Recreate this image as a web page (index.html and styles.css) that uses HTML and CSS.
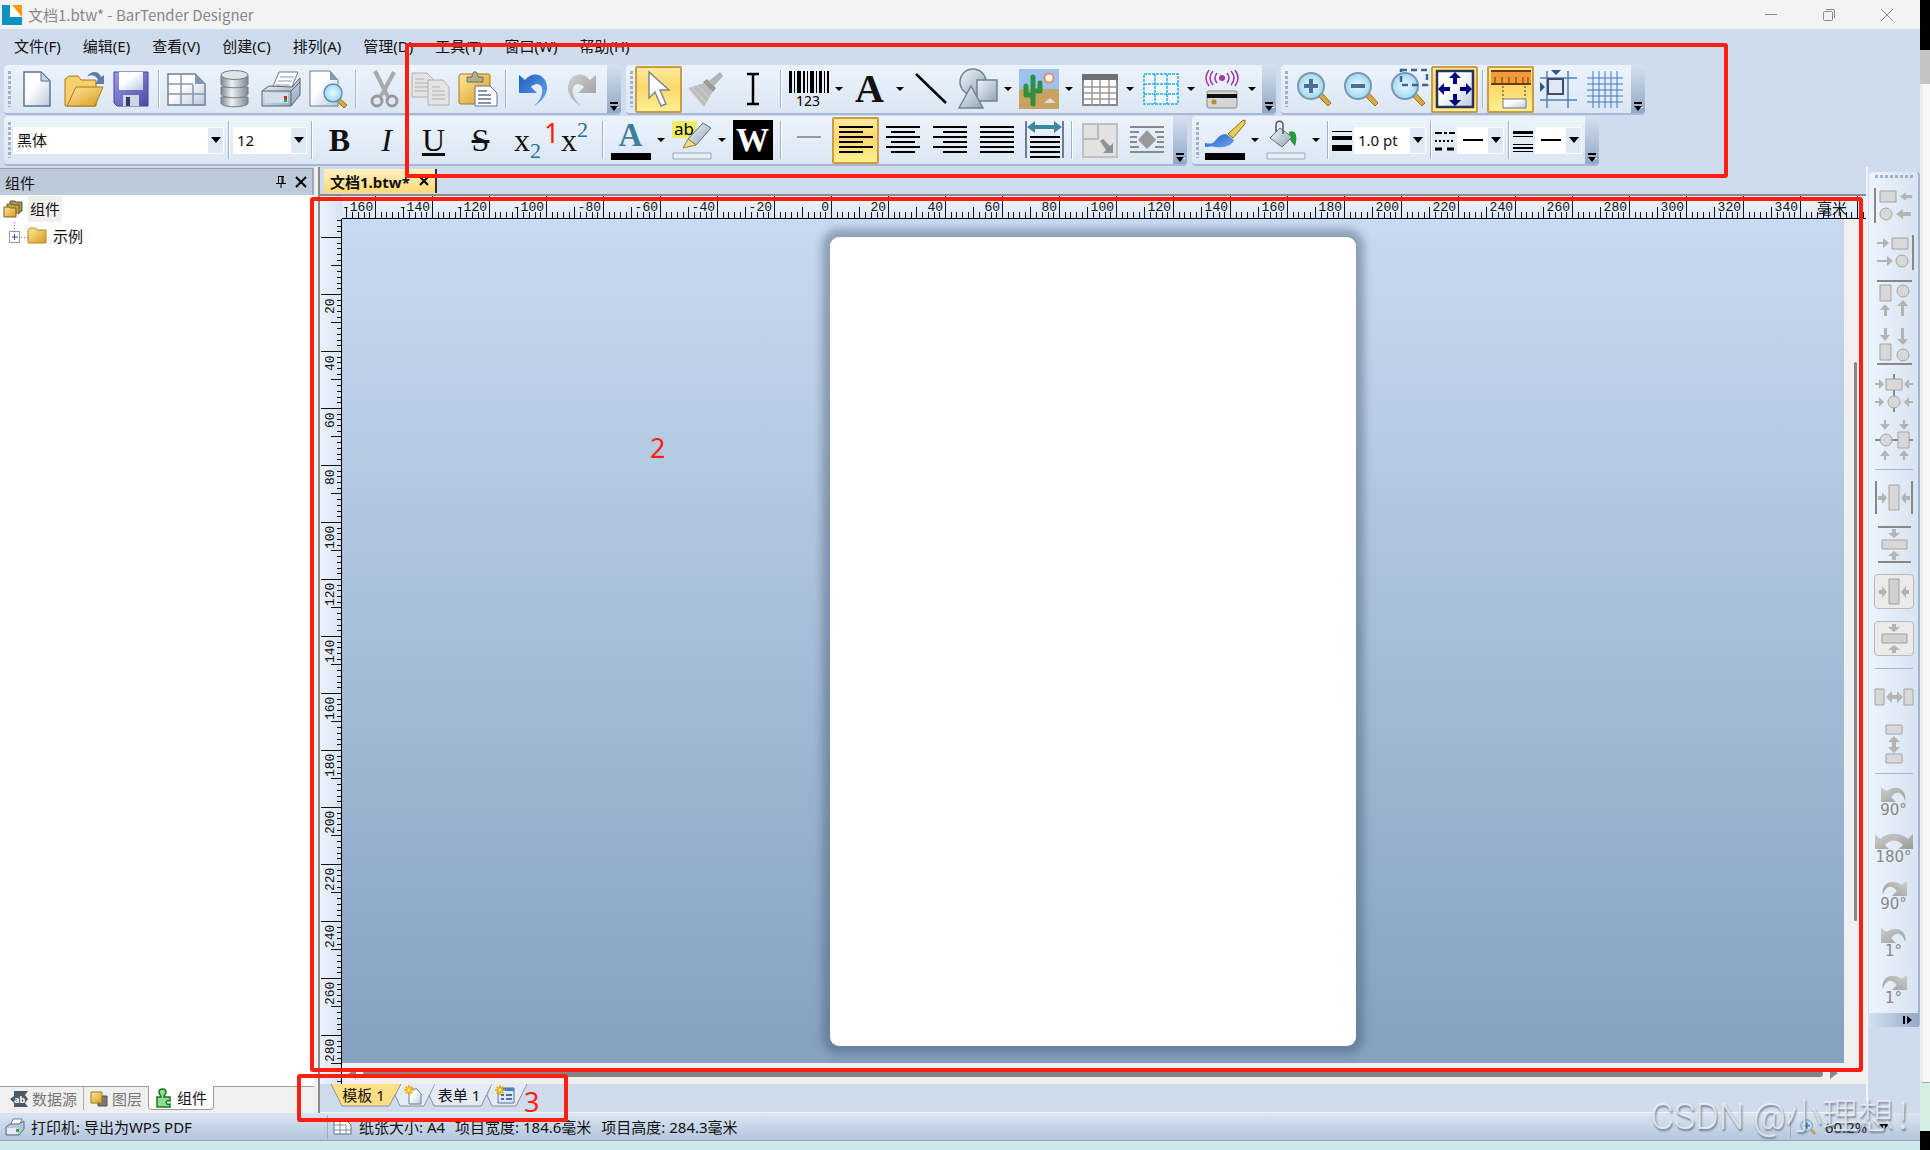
FILE: index.html
```html
<!DOCTYPE html>
<html lang="zh-CN">
<head>
<meta charset="utf-8">
<title>文档1.btw* - BarTender Designer</title>
<link rel="stylesheet" href="styles.css">
</head>
<body>
<svg class="defs" width="0" height="0" aria-hidden="true">
  <defs>
    <linearGradient id="g-paper" x1="0" y1="0" x2="1" y2="1"><stop offset=".4" stop-color="#fff"/><stop offset="1" stop-color="#b9c9df"/></linearGradient>
    <linearGradient id="g-gold" x1="0" y1="0" x2="1" y2="1"><stop offset="0" stop-color="#ffe9a0"/><stop offset="1" stop-color="#d99a1c"/></linearGradient>
    <linearGradient id="g-steel" x1="0" y1="0" x2="1" y2="0"><stop offset="0" stop-color="#7e8891"/><stop offset=".4" stop-color="#eef1f3"/><stop offset="1" stop-color="#7e8891"/></linearGradient>
    <linearGradient id="g-grey" x1="0" y1="0" x2="1" y2="1"><stop offset="0" stop-color="#cfcfcf"/><stop offset="1" stop-color="#9a9a9a"/></linearGradient>
    <linearGradient id="g-blue" x1="0" y1="0" x2="1" y2="1"><stop offset="0" stop-color="#1f5fc0"/><stop offset="1" stop-color="#6ea6ee"/></linearGradient>
    <linearGradient id="g-shape" x1="0" y1="0" x2="1" y2="1"><stop offset="0" stop-color="#f2f6f9"/><stop offset="1" stop-color="#8fa5b5"/></linearGradient>
    <linearGradient id="g-violet" x1="0" y1="0" x2="1" y2="1"><stop offset="0" stop-color="#9a9ae6"/><stop offset="1" stop-color="#4b4ba6"/></linearGradient>
    <radialGradient id="g-lens"><stop offset="0" stop-color="#e9fbff"/><stop offset="1" stop-color="#9fd8f2"/></radialGradient>
    <symbol id="lens" viewBox="0 0 40 40"><path d="M24 27l10 10 3-3-9-10z" fill="#d9a93f" stroke="#94722a"/><circle cx="17" cy="17" r="13" fill="url(#g-lens)" stroke="#7c98ae" stroke-width="2"/></symbol>
    <symbol id="more" viewBox="0 0 14 14"><path d="M3 2h8v2H3z" fill="#000"/><path d="M4 7h8v1H4z" fill="#fff"/><path d="M3 6h8l-4 5z" fill="#000"/></symbol>
    <symbol id="al" viewBox="0 0 16 12"><path d="M0 6l7-5v3h8v4H7v3z" fill="#b4b4b4"/></symbol>
    <symbol id="rot" viewBox="0 0 30 18"><path d="M1 1v16h16l-5-5c4-7 12-7 15 4C29 5 19-3 7 5z" fill="url(#g-grey)"/></symbol>
    <symbol id="sun" viewBox="0 0 12 12"><path d="M6 0v12M0 6h12M2 2l8 8M10 2l-8 8" stroke="#f5a800" stroke-width="2"/><circle cx="6" cy="6" r="2" fill="#ffec7a"/></symbol>
    <pattern id="ticks-h" x="33" y="0" width="57" height="22" patternUnits="userSpaceOnUse"><path d="M.5 0v22M28.5 11v11M6.5 16v6M11.5 16v6M17.5 16v6M23.5 16v6M34.5 16v6M40.5 16v6M46.5 16v6M51.5 16v6" stroke="#111"/></pattern>
    <pattern id="ticks-v" x="0" y="18" width="22" height="57" patternUnits="userSpaceOnUse"><path d="M1 .5h21M11 28.5h11M17 6.5h5M17 11.5h5M17 17.5h5M17 23.5h5M17 34.5h5M17 40.5h5M17 46.5h5M17 51.5h5" stroke="#111"/></pattern>
  </defs>
</svg>

<div class="screen">
<div class="desktop">
<div class="window">

  <header class="titlebar">
    <svg width="20" height="20" viewBox="0 0 20 20"><path d="M0 0h20v20H0z" fill="#0b93c6"/><path d="M8 0h12v12H8z" fill="#fff"/><path d="M10 0h10v12z" fill="#ff9a00"/></svg>
    <h1>文档1.btw* - BarTender Designer</h1>
    <button aria-label="最小化"><svg width="14" height="14"><path d="M1 6.500h12" stroke="#888"/></svg></button>
    <button aria-label="还原"><svg width="14" height="14" fill="none" stroke="#888"><rect x="1.500" y="3.500" width="9" height="9" rx="1"/><path d="M4 1.500h7q1.500 0 1.500 1.500v7"/></svg></button>
    <button aria-label="关闭"><svg width="14" height="14"><path d="M1 1l12 12M13 1L1 13" stroke="#888"/></svg></button>
  </header>

  <nav class="menu">
    <button>文件(F)</button><button>编辑(E)</button><button>查看(V)</button><button>创建(C)</button><button>排列(A)</button><button>管理(D)</button><button>工具(T)</button><button>窗口(W)</button><button>帮助(H)</button>
  </nav>

  <div class="bars">
    <div class="bar">
      <i class="grip"></i>
      <button class="tool" aria-label="新建"><svg viewBox="0 0 40 40"><path d="M7 3h17l9 9v25H7z" fill="url(#g-paper)" stroke="#5f7390" stroke-width="1.500"/><path d="M24 3v9h9z" fill="#c7d5e8" stroke="#5f7390"/></svg></button>
      <button class="tool" aria-label="打开"><svg viewBox="0 0 40 40"><path d="M1 37V10l4-3h9l3 4h15v26z" fill="#f6d06a" stroke="#a87a1c"/><path d="M3 37l9-19h27l-8 19z" fill="url(#g-gold)" stroke="#a87a1c"/><path d="M23 8c4-7 12-6 14 0l3-2v9h-9l3-4c-2-5-7-6-11-3z" fill="#5b7da8"/></svg></button>
      <button class="tool" aria-label="保存"><svg viewBox="0 0 40 40"><path d="M3 3h34v34H6l-3-3z" fill="url(#g-violet)" stroke="#44449a"/><path d="M8 3h24v18H8z" fill="url(#g-paper)"/><path d="M12 26h16v11H12z" fill="#cfd6e6"/><path d="M15 28h4v9h-4z" fill="#333a5c"/></svg></button>
      <i class="sep"></i>
      <button class="tool" aria-label="页面设置"><svg viewBox="0 0 40 40"><path d="M1 5h27l10 10v21H1z" fill="url(#g-paper)" stroke="#6e7f98" stroke-width="1.500"/><path d="M28 5v10h10z" fill="#8598b2"/><path d="M14 5v31M26 16v20M1 15h25M1 25h37" stroke="#8796ac" stroke-width="1.500" fill="none"/></svg></button>
      <button class="tool" aria-label="数据库"><svg viewBox="0 0 40 40" stroke="#727c85"><path d="M7 28v6c0 5 27 5 27 0v-6z" fill="url(#g-steel)"/><path d="M7 18v7c0 5 27 5 27 0v-7z" fill="url(#g-steel)"/><path d="M7 7v8c0 5 27 5 27 0V7z" fill="url(#g-steel)"/><ellipse cx="20.500" cy="6" rx="13.500" ry="4.500" fill="#dfe4e8"/></svg></button>
      <button class="tool" aria-label="打印"><svg viewBox="0 0 40 40"><path d="M11 20L18 3h19l-7 17z" fill="#fff" stroke="#6b7c94"/><path d="M19 8h14M17 12h14M15 16h14" stroke="#8a99ad"/><path d="M1 22l7-5 23 1 8-9v17l-9 11H1z" fill="url(#g-shape)" stroke="#53657f"/><path d="M1 22h29l9-9M30 22v15" fill="none" stroke="#53657f"/><path d="M4 24h23v10H4z" fill="#d5dfec"/><path d="M23 27h3v3h-3z" fill="#d22"/><path d="M23 30h3v3h-3z" fill="#1a3"/></svg></button>
      <button class="tool" aria-label="打印预览"><svg viewBox="0 0 40 40"><path d="M2 2h20l8 9v26H2z" fill="url(#g-paper)" stroke="#6b7c94"/><path d="M22 2v9h8z" fill="#8598b2"/><path d="M31 29l8 7-3 3-8-8z" fill="#d9a93f" stroke="#94722a"/><circle cx="25" cy="24" r="9" fill="url(#g-lens)" stroke="#5f8fb5" stroke-width="1.500"/></svg></button>
      <i class="sep"></i>
      <button class="tool" aria-label="剪切"><svg viewBox="0 0 40 40"><path d="M11 2l10 20 3 6M30 3L20 22l-4 6" stroke="#aaa" stroke-width="4" fill="none"/><g fill="none" stroke="#999" stroke-width="3"><circle cx="13" cy="32" r="5"/><circle cx="28" cy="32" r="5"/></g></svg></button>
      <button class="tool" aria-label="复制"><svg viewBox="0 0 40 40" fill="#e4e4e4" stroke="#b0b0b0"><path d="M1 4h15l6 6v18H1z"/><path d="M4 10h9M4 14h14M4 18h14M4 22h14"/><path d="M17 11h15l6 7v18H17z"/><path d="M21 18h8M21 22h13M21 26h13M21 30h13"/></svg></button>
      <button class="tool" aria-label="粘贴"><svg viewBox="0 0 40 40"><rect x="1" y="5" width="31" height="30" rx="2" fill="url(#g-gold)" stroke="#a07618"/><path d="M9 13V8h5c0-7 6-7 6 0h5v5z" fill="#b0b08f" stroke="#6f6d50"/><path d="M17 17h15l7 7v13H17z" fill="#fff" stroke="#5f7390"/><path d="M20 22h9M20 26h13M20 30h13M20 34h13" stroke="#5f7390" stroke-width="1.500"/></svg></button>
      <i class="sep"></i>
      <button class="tool" aria-label="撤消"><svg viewBox="0 0 40 40"><path d="M5 6v18h18l-6-6c6-6 13-2 11 6-1 6-4 9-8 13 9-5 14-13 13-20C31 4 18 2 11 11z" fill="url(#g-blue)"/></svg></button>
      <button class="tool" aria-label="恢复"><svg viewBox="0 0 40 40"><path d="M35 6v18H17l6-6c-6-6-13-2-11 6 1 6 4 9 8 13C11 32 6 24 7 17 9 4 22 2 29 11z" fill="url(#g-grey)"/></svg></button>
      <button class="more" aria-label="更多"><svg width="14" height="14"><use href="#more"/></svg></button>
    </div>

    <div class="bar">
      <i class="grip"></i>
      <button class="tool on" aria-label="选择"><svg viewBox="0 0 40 40"><path d="M10 3v26l6-6 6 14 5-2-6-14h9z" fill="#fff" stroke="#7d8796" stroke-width="1.500"/></svg></button>
      <button class="tool" aria-label="格式刷"><svg viewBox="0 0 40 40"><path d="M2 19l16-5 9 8-9 16z" fill="#bdbdbd"/><path d="M2 19l16 19M6 18l14 16M11 16l12 13" stroke="#d8d8d8"/><path d="M17 13l4-3 9 9-3 4z" fill="#999"/><path d="M23 12L34 3l3 4-9 10z" fill="#b5b5b5"/></svg></button>
      <button class="tool" aria-label="文本光标"><svg viewBox="0 0 40 40"><path d="M14 5h5l1 1 1-1h5M20 5v30M14 35h5l1-1 1 1h5" stroke="#000" stroke-width="2.500" fill="none"/></svg></button>
      <i class="sep"></i>
      <button class="tool" aria-label="条形码"><svg viewBox="0 0 40 40"><path d="M0 2h3v22H0zM5 2h1v22H5zM8 2h4v22H8zM14 2h2v22h-2zM18 2h1v22h-1zM21 2h4v22h-4zM27 2h1v22h-1zM30 2h3v22h-3zM35 2h1v22h-1zM38 2h2v22h-2z"/><text x="19" y="37" text-anchor="middle" class="digits">123</text></svg></button>
      <button class="drop" aria-label="条形码选项"></button>
      <button class="tool glyph big" aria-label="文本">A</button>
      <button class="drop" aria-label="文本选项"></button>
      <button class="tool" aria-label="线条"><svg viewBox="0 0 40 40"><path d="M5 5l30 29" stroke="#000" stroke-width="2.500"/></svg></button>
      <button class="tool" aria-label="形状"><svg viewBox="0 0 40 40" fill="url(#g-shape)" stroke="#6c8496" stroke-width="1.500"><circle cx="15" cy="13" r="13"/><path d="M19 11h20v21H19z"/><path d="M13 17l12 22H1z"/></svg></button>
      <button class="drop" aria-label="形状选项"></button>
      <button class="tool" aria-label="图片"><svg viewBox="0 0 40 40"><path d="M0 0h40v21H0z" fill="#9cc2f0"/><path d="M0 20h40v20H0z" fill="#caa25f"/><circle cx="30" cy="9" r="4.500" fill="#fff" stroke="#ee8a5a" stroke-width="2"/><path d="M14 35V8M14 26H7v-9M14 22h7v-8" fill="none" stroke="#2e8f3e" stroke-width="5" stroke-linecap="round" stroke-linejoin="round"/><path d="M25 34l6-5 6 5z" fill="#dde"/></svg></button>
      <button class="drop" aria-label="图片选项"></button>
      <button class="tool" aria-label="表格"><svg viewBox="0 0 40 40"><path d="M3 6h34v30H3z" fill="#fff" stroke="#888" stroke-width="2"/><path d="M2 5h36v6H2z" fill="#707070"/><path d="M3 18h34M3 24h34M3 30h34M12 11v25M20 11v25M29 11v25" stroke="#999" stroke-width="1.500"/></svg></button>
      <button class="drop" aria-label="表格选项"></button>
      <button class="tool" aria-label="布局网格"><svg viewBox="0 0 40 40"><path d="M3 5h34v30H3zM3 15h34M3 25h34M14 5v30M26 5v30" fill="#fff" fill-opacity=".5" stroke="#1fb0f0" stroke-width="1.500" stroke-dasharray="3 1"/></svg></button>
      <button class="drop" aria-label="布局网格选项"></button>
      <button class="tool" aria-label="编码器"><svg viewBox="0 0 40 40"><g fill="none" stroke="#a23aa0" stroke-width="1.500"><path d="M15 4q-4 5 0 10M11 2q-6 7 0 14M7 1q-6 8 0 16M25 4q4 5 0 10M29 2q6 7 0 14M33 1q6 8 0 16"/></g><circle cx="20" cy="9" r="3" fill="#a23aa0"/><rect x="5" y="22" width="30" height="17" rx="2" fill="#d6d6d6" stroke="#888"/><path d="M5 25h30v4H5z" fill="#111"/><circle cx="12" cy="33" r="2.500" fill="#b98b32"/></svg></button>
      <button class="drop" aria-label="编码器选项"></button>
      <button class="more" aria-label="更多"><svg width="14" height="14"><use href="#more"/></svg></button>
    </div>

    <div class="bar">
      <i class="grip"></i>
      <button class="tool" aria-label="放大"><svg viewBox="0 0 40 40"><use href="#lens"/><path d="M17 10v14M10 17h14" stroke="#4d6f96" stroke-width="4"/></svg></button>
      <button class="tool" aria-label="缩小"><svg viewBox="0 0 40 40"><use href="#lens"/><path d="M10 17h14" stroke="#4d6f96" stroke-width="4"/></svg></button>
      <button class="tool" aria-label="缩放到选定区域"><svg viewBox="0 0 40 40"><use href="#lens"/><path d="M13 1h26v15H13z" fill="none" stroke="#3d6594" stroke-width="2.500" stroke-dasharray="6 4"/></svg></button>
      <button class="tool on" aria-label="适合窗口"><svg viewBox="0 0 40 40"><path d="M2 2h36v36H2z" fill="url(#g-paper)" stroke="#2b3350" stroke-width="2.500"/><path d="M20 3l6 6h-4v6h-4V9h-4zM20 37l6-6h-4v-6h-4v6h-4zM3 20l6-6v4h6v4H9v4zM37 20l-6-6v4h-6v4h6v4z" fill="#00007e"/></svg></button>
      <i class="sep"></i>
      <button class="tool on" aria-label="标尺"><svg viewBox="0 0 40 40"><path d="M0 1h40v14H0z" fill="#f29a38"/><path d="M0 2h40M0 15h40" stroke="#6b3b08" stroke-width="2"/><path d="M4 8v6M11 8v6M18 8v6M25 8v6M32 8v6M37 8v6" stroke="#6b3b08"/><path d="M12 17v13M34 17v13" stroke="#333" stroke-dasharray="2 2"/><path d="M12 30h23v9H12z" fill="url(#g-paper)" stroke="#6b7c94"/></svg></button>
      <button class="tool" aria-label="对齐参考线"><svg viewBox="0 0 40 40"><path d="M9 2v37M30 2v37M2 9h37M2 31h37" stroke="#4f82bd" stroke-width="1.500"/><path d="M10 10h15v15H10z" fill="#dfe9f6" stroke="#444b66" stroke-width="2"/><path d="M13 1h10l-5 5zM2 13v10l5-5z" fill="#2f5688"/></svg></button>
      <button class="tool" aria-label="网格"><svg viewBox="0 0 40 40"><path d="M8 2v37M14 2v37M20 2v37M26 2v37M32 2v37M2 9h36M2 15h36M2 21h36M2 27h36M2 33h36" stroke="#3f78bf"/></svg></button>
      <button class="more" aria-label="更多"><svg width="14" height="14"><use href="#more"/></svg></button>
    </div>
  </div>

  <div class="bars">
    <div class="bar">
      <i class="grip"></i>
      <label class="combo font"><select aria-label="字体"><option>黑体</option></select><i class="chev"></i></label>
      <i class="sep"></i>
      <label class="combo size"><select aria-label="字号"><option>12</option></select><i class="chev"></i></label>
      <i class="sep"></i>
      <button class="tool glyph" aria-label="粗体"><b>B</b></button>
      <button class="tool glyph" aria-label="斜体"><em>I</em></button>
      <button class="tool glyph" aria-label="下划线"><u>U</u></button>
      <button class="tool glyph" aria-label="删除线"><s>S</s></button>
      <button class="tool glyph" aria-label="下标">x<sub>2</sub></button>
      <button class="tool glyph" aria-label="上标">x<sup>2</sup></button>
      <i class="sep"></i>
      <button class="tool color" aria-label="字体颜色"><span>A</span><i class="swatch"></i></button>
      <button class="drop" aria-label="字体颜色选项"></button>
      <button class="tool" aria-label="突出显示"><svg viewBox="0 0 40 40"><path d="M0 1h25v17H0z" fill="#eeee62"/><text x="2" y="15" class="ab">ab</text><path d="M16 19L31 3l8 5-15 17z" fill="url(#g-shape)" stroke="#566a96"/><path d="M16 19l-5 9 13-3z" fill="#f3dc8a" stroke="#9b8230"/><path d="M1 33h38v6H1z" fill="#e9eef4" stroke="#9aa9bb"/></svg></button>
      <button class="drop" aria-label="突出显示选项"></button>
      <button class="tool" aria-label="反白"><span class="invert">W</span></button>
      <i class="sep"></i>
      <button class="tool" aria-label="水平线"><svg viewBox="0 0 40 40"><path d="M8 17h24" stroke="#999" stroke-width="2"/></svg></button>
      <button class="tool on" aria-label="左对齐"><svg viewBox="0 0 40 40"><path d="M3 7h34M3 12h24M3 17h34M3 22h24M3 27h34M3 32h24" stroke="#000" stroke-width="2"/></svg></button>
      <button class="tool" aria-label="居中"><svg viewBox="0 0 40 40"><path d="M3 7h34M8 12h24M3 17h34M8 22h24M3 27h34M8 32h24" stroke="#000" stroke-width="2"/></svg></button>
      <button class="tool" aria-label="右对齐"><svg viewBox="0 0 40 40"><path d="M3 7h34M13 12h24M3 17h34M13 22h24M3 27h34M13 32h24" stroke="#000" stroke-width="2"/></svg></button>
      <button class="tool" aria-label="两端对齐"><svg viewBox="0 0 40 40"><path d="M3 7h34M3 12h34M3 17h34M3 22h34M3 27h34M3 32h34" stroke="#000" stroke-width="2"/></svg></button>
      <button class="tool" aria-label="适应宽度"><svg viewBox="0 0 40 40"><path d="M2 1v37M39 1v37" stroke="#46586c" stroke-width="1.500"/><path d="M3 7l8-6v4h19V1l8 6-8 6V9H11v4z" fill="#3f87a3"/><path d="M6 17h30M6 22h30M6 27h30M6 32h30M6 37h30" stroke="#000" stroke-width="2"/></svg></button>
      <i class="sep"></i>
      <button class="tool" aria-label="缩放文字"><svg viewBox="0 0 40 40"><path d="M3 4h34v33H3z" fill="#e2e2e2" stroke="#c0c0c0" stroke-width="2"/><path d="M3 19h15V4" fill="none" stroke="#bbb" stroke-width="2"/><path d="M20 21l3-2 7 7 3-3v10H23l3-3z" fill="#909090"/></svg></button>
      <button class="tool" aria-label="环绕文字"><svg viewBox="0 0 40 40"><path d="M3 7h34M3 12h9M28 12h9M3 17h7M30 17h7M3 22h7M30 22h7M3 27h9M28 27h9M3 32h34" stroke="#8b8b8b" stroke-width="2"/><path d="M20 10l9 10-9 9-9-9z" fill="#999"/></svg></button>
      <button class="more" aria-label="更多"><svg width="14" height="14"><use href="#more"/></svg></button>
    </div>

    <div class="bar">
      <i class="grip"></i>
      <button class="tool" aria-label="线条颜色"><svg viewBox="0 0 40 40"><path d="M23 14L37 1l3-1v4L28 18z" fill="#edc95a" stroke="#8c6c1c"/><path d="M21 14l8 6c-2 6-10 8-19 7-4-1-6 0-10 0v-4c6 1 7 1 10-2 3-4 6-7 11-7z" fill="url(#g-blue)"/><path d="M0 33h40v7H0z"/></svg></button>
      <button class="drop" aria-label="线条颜色选项"></button>
      <button class="tool" aria-label="填充颜色"><svg viewBox="0 0 40 40"><path d="M23 12c7-3 9 5 6 14-4-4-6-7-6-14z" fill="#1fa03a"/><path d="M14 8l12 9-10 10L4 18z" fill="url(#g-shape)" stroke="#5d6f87"/><path d="M10 12V5c0-5 7-5 7 0v9" fill="none" stroke="#555" stroke-width="1.500"/><path d="M1 33h38v6H1z" fill="#e9eef4" stroke="#9aa9bb"/></svg></button>
      <button class="drop" aria-label="填充颜色选项"></button>
      <i class="sep"></i>
      <svg class="hint" width="22" height="24"><path d="M0 3h20v1H0zM0 8h20v4H0zM0 17h20v6H0z"/></svg>
      <label class="combo weight"><select aria-label="线条粗细"><option>1.0 pt</option></select><i class="chev"></i></label>
      <i class="sep"></i>
      <svg class="hint" width="22" height="24"><path d="M0 5h20" stroke="#000" stroke-width="2" stroke-dasharray="7 2 3 2"/><path d="M0 13h20" stroke="#000" stroke-width="2" stroke-dasharray="2 2"/><path d="M0 21h20" stroke="#000" stroke-width="3" stroke-dasharray="7 5"/></svg>
      <label class="combo line"><select aria-label="虚线样式"><option></option></select><i class="chev"></i></label>
      <i class="sep"></i>
      <svg class="hint" width="22" height="24"><path d="M0 3h20v3H0zM0 8h20v1H0zM0 16h20v1H0zM0 19h20v2H0zM0 23h20v1H0z"/></svg>
      <label class="combo line"><select aria-label="复合样式"><option></option></select><i class="chev"></i></label>
      <button class="more" aria-label="更多"><svg width="14" height="14"><use href="#more"/></svg></button>
    </div>
  </div>

  <main class="work">
    <aside class="panel">
      <header class="panel-head">
        <h2>组件</h2>
        <button aria-label="固定"><svg width="10" height="12"><path d="M2 .5h6M2.500 0v7M6 0v7h1V0M0 7.500h10M5 7v5" stroke="#000" fill="none"/></svg></button>
        <button aria-label="关闭面板"><svg width="10" height="10"><path d="M0 0l10 10M10 0L0 10" stroke="#000" stroke-width="2"/></svg></button>
      </header>
      <div class="tree">
        <div class="node root"><svg width="20" height="18"><path d="M7 5V1h5l1 1h6v9l-4 2z" fill="#a8935a" stroke="#6b5a2a"/><path d="M4 8V4h5l1 1h6v9z" fill="#c9a74a" stroke="#6b5a2a"/><path d="M1 17V7h5l1 1h6v9z" fill="url(#g-gold)" stroke="#7a6225"/></svg><span>组件</span></div>
        <div class="node child"><svg width="38" height="28"><path d="M5.500 0v9M12 15.500h8" stroke="#777" stroke-dasharray="1 2"/><rect x=".5" y="9.500" width="10" height="11" fill="#fff" stroke="#999"/><path d="M3 15h6M5.500 12v6" stroke="#2a4a9a"/><path d="M19 21V8l2-2h5l2 2h9v13z" fill="url(#g-gold)" stroke="#b08a2c"/></svg><span>示例</span></div>
      </div>
      <nav class="panel-tabs">
        <button><svg width="18" height="16"><path d="M4 0h14l-3 4 3 4-3 4 3 4H4V12L0 8l4-3z" fill="#4d5968"/><text x="4" y="12" class="tiny">ab</text></svg>数据源</button>
        <button><svg width="18" height="16"><path d="M8 5h9v10H8z" fill="#777" stroke="#555"/><path d="M1 1h11v11H1z" fill="url(#g-gold)" stroke="#a07618"/></svg>图层</button>
        <button class="active"><svg width="18" height="20"><path d="M2 9h4c0-2-2-2-2-5 0-4 7-4 7 0 0 2-2 3-2 5h6v4c-5-2-5 5 0 3v3H2z" fill="#8fdc8a" stroke="#17752a" stroke-width="1.500"/></svg>组件</button>
      </nav>
    </aside>

    <section class="document">
      <div class="doc-tabs"><button class="doc-tab">文档1.btw* <svg width="10" height="10"><path d="M1 1l8 8M9 1L1 9" stroke="#000" stroke-width="2"/></svg></button></div>
      <div class="editor">
        <div class="corner"></div>
        <div class="ruler-h">
          <svg width="100%" height="22"><rect width="100%" height="22" fill="url(#ticks-h)"/></svg>
          <div class="marks"><span>-160</span><span>-140</span><span>-120</span><span>-100</span><span>-80</span><span>-60</span><span>-40</span><span>-20</span><span>0</span><span>20</span><span>40</span><span>60</span><span>80</span><span>100</span><span>120</span><span>140</span><span>160</span><span>180</span><span>200</span><span>220</span><span>240</span><span>260</span><span>280</span><span>300</span><span>320</span><span>340</span><span class="unit">毫米</span></div>
        </div>
        <div class="ruler-v">
          <svg width="22" height="100%"><rect width="22" height="100%" fill="url(#ticks-v)"/></svg>
          <div class="marks"><span></span><span></span><span>20</span><span>40</span><span>60</span><span>80</span><span>100</span><span>120</span><span>140</span><span>160</span><span>180</span><span>200</span><span>220</span><span>240</span><span>260</span><span>280</span></div>
        </div>
        <div class="canvas"><div class="page"></div></div>
        <div class="scroll-v"><i></i></div>
        <div class="scroll-h"><svg width="8" height="10"><path d="M8 0v10L0 5z" fill="#888"/></svg><i></i><svg width="8" height="10"><path d="M0 0v10l8-6z" fill="#888"/></svg></div>
      </div>
      <div class="sheets">
        <button class="sheet active w70"><svg viewBox="0 0 70 23" class="edge"><path d="M0 0h70L58 22H11z" fill="#ffdf86"/><path d="M0 0l11 22h47L70 0" fill="none" stroke="#8d8f94"/></svg><span>模板 1</span></button>
        <button class="sheet w35" aria-label="新建模板"><svg viewBox="0 0 39 23" class="edge"><path d="M4 0h35L28 22H4L0 13z" fill="#e3ebf6"/><path d="M-1 11l5 11h24L39 0" fill="none" stroke="#8d8f94"/></svg><svg width="18" height="20" class="pic"><path d="M5 4h8l4 5v10H5z" fill="url(#g-paper)" stroke="#6b7c94"/><use href="#sun" width="10" height="10"/></svg></button>
        <button class="sheet w58"><svg viewBox="0 0 62 23" class="edge"><path d="M5 0h57L51 22H5L0 13z" fill="#e3ebf6"/><path d="M-1 11l5 11h47L62 0" fill="none" stroke="#8d8f94"/></svg><span>表单 1</span></button>
        <button class="sheet w35" aria-label="新建表单"><svg viewBox="0 0 39 23" class="edge"><path d="M4 0h35L28 22H4L0 13z" fill="#e3ebf6"/><path d="M-1 11l5 11h24L39 0" fill="none" stroke="#8d8f94"/></svg><svg width="20" height="20" class="pic"><path d="M3 3h16v15H3z" fill="#dfe8f5" stroke="#4f6f9f"/><path d="M3 3h16v3H3z" fill="#4f7fc5"/><path d="M6 10h3M11 10h6M6 14h3M11 14h6" stroke="#4f6f9f" stroke-width="2"/><use href="#sun" width="10" height="10"/></svg></button>
      </div>
    </section>

    <aside class="dock">
      <i class="grip"></i>
      <button class="tool" aria-label="左对齐对象"><svg viewBox="0 0 40 40"><path d="M1 3v35" stroke="#888" stroke-width="2"/><g fill="#d8d8d8" stroke="#a4a4a4"><path d="M6 6h16v11H6z"/><circle cx="12" cy="29" r="6"/></g><use href="#al" x="26" y="6" width="13" height="11"/><use href="#al" x="21" y="23" width="18" height="12"/></svg></button>
      <button class="tool" aria-label="右对齐对象"><svg viewBox="0 0 40 40"><path d="M39 3v35" stroke="#888" stroke-width="2"/><g fill="#d8d8d8" stroke="#a4a4a4"><path d="M18 6h16v11H18z"/><circle cx="28" cy="29" r="6"/></g><path d="M3 10h6V6l6 5-6 5v-4H3zM3 28h10v-4l6 5-6 5v-4H3z" fill="#b4b4b4"/></svg></button>
      <button class="tool" aria-label="顶端对齐"><svg viewBox="0 0 40 40"><path d="M3 2h35" stroke="#888" stroke-width="2"/><g fill="#d8d8d8" stroke="#a4a4a4"><path d="M6 6h11v16H6z"/><circle cx="29" cy="12" r="6"/></g><path d="M10 37v-6H6l5-6 5 6h-3v6zM27 37V27h-4l6-6 5 6h-4v10z" fill="#b4b4b4"/></svg></button>
      <button class="tool" aria-label="底端对齐"><svg viewBox="0 0 40 40"><path d="M3 38h35" stroke="#888" stroke-width="2"/><g fill="#d8d8d8" stroke="#a4a4a4"><path d="M6 18h11v16H6z"/><circle cx="29" cy="29" r="6"/></g><path d="M10 2v7H6l5 6 5-6h-3V2zM27 2v11h-4l6 6 5-6h-4V2z" fill="#b4b4b4"/></svg></button>
      <button class="tool" aria-label="水平居中"><svg viewBox="0 0 40 40"><path d="M20 1v38" stroke="#888" stroke-width="2"/><g fill="#d8d8d8" stroke="#a4a4a4"><path d="M12 6h16v11H12z"/><circle cx="20" cy="29" r="6"/></g><path d="M1 10h4V6l5 5-5 5v-4H1zM1 28h4v-4l5 5-5 5v-4H1zM39 10h-4V6l-5 5 5 5v-4h4zM39 28h-4v-4l-5 5 5 5v-4h4z" fill="#b4b4b4"/></svg></button>
      <button class="tool" aria-label="垂直居中"><svg viewBox="0 0 40 40"><path d="M1 20h38" stroke="#888" stroke-width="2"/><g fill="#d8d8d8" stroke="#a4a4a4"><path d="M24 12h11v16H24z"/><circle cx="12" cy="20" r="6"/></g><path d="M10 0v4H6l5 6 5-6h-4V0zM29 0v4h-4l5 6 5-6h-4V0zM10 40v-4H6l5-6 5 6h-4v4zM29 40v-4h-4l5-6 5 6h-4v4z" fill="#b4b4b4"/></svg></button>
      <i class="rule"></i>
      <button class="tool" aria-label="页面水平居中"><svg viewBox="0 0 40 40"><path d="M2 3v33M38 3v33" stroke="#888" stroke-width="2"/><path d="M15 7h10v25H15z" fill="#d8d8d8" stroke="#a4a4a4"/><path d="M4 18h4v-4l5 6-5 6v-4H4zM36 18h-4v-4l-5 6 5 6v-4h4z" fill="#b4b4b4"/></svg></button>
      <button class="tool" aria-label="页面垂直居中"><svg viewBox="0 0 40 40"><path d="M4 2h33M4 37h33" stroke="#888" stroke-width="2"/><path d="M8 15h25v9H8z" fill="#d8d8d8" stroke="#a4a4a4"/><path d="M18 4v4h-4l6 5 6-5h-4V4zM18 35v-4h-4l6-5 6 5h-4v4z" fill="#b4b4b4"/></svg></button>
      <button class="tool framed" aria-label="模板水平居中"><svg viewBox="0 0 40 40"><path d="M15 7h10v25H15z" fill="#d0d0d0" stroke="#a0a0a0"/><path d="M5 18h3v-4l5 6-5 6v-4H5zM35 18h-3v-4l-5 6 5 6v-4h3z" fill="#b4b4b4"/></svg></button>
      <button class="tool framed" aria-label="模板垂直居中"><svg viewBox="0 0 40 40"><path d="M8 15h25v9H8z" fill="#d0d0d0" stroke="#a0a0a0"/><path d="M18 5v3h-4l6 5 6-5h-4V5zM18 34v-3h-4l6-5 6 5h-4v3z" fill="#b4b4b4"/></svg></button>
      <i class="rule"></i>
      <button class="tool" aria-label="水平间距"><svg viewBox="0 0 40 40"><path d="M1 12h9v16H1zM30 12h9v16h-9z" fill="#d8d8d8" stroke="#a4a4a4"/><path d="M12 20l6-6v4h5v-4l6 6-6 6v-4h-5v4z" fill="#b4b4b4"/></svg></button>
      <button class="tool" aria-label="垂直间距"><svg viewBox="0 0 40 40"><path d="M12 1h16v9H12zM12 30h16v9H12z" fill="#d8d8d8" stroke="#a4a4a4"/><path d="M20 12l-6 6h4v5h-4l6 6 6-6h-4v-5h4z" fill="#b4b4b4"/></svg></button>
      <i class="rule"></i>
      <button class="tool turn"><svg><use href="#rot"/></svg>90°</button>
      <button class="tool turn"><svg viewBox="0 0 38 17" class="wide"><path d="M0 1v15h14l-4-4c5-6 13-6 18 0l-4 4h14V1l-5 5C26-1 12-1 5 6z" fill="url(#g-grey)"/></svg>180°</button>
      <button class="tool turn"><svg class="flip"><use href="#rot"/></svg>90°</button>
      <button class="tool turn"><svg><use href="#rot"/></svg>1°</button>
      <button class="tool turn"><svg class="flip"><use href="#rot"/></svg>1°</button>
      <button class="dock-more" aria-label="更多"><svg width="10" height="8"><path d="M0 0h2v8H0zM4 0l5 4-5 4z"/></svg></button>
    </aside>
  </main>

  <footer class="status">
    <div class="printer"><svg width="20" height="18"><path d="M5 8l3-7h9l-3 7z" fill="#fff" stroke="#6b7c94"/><path d="M1 9l4-3h9l5-3v8l-5 6H1z" fill="#b8c6d8" stroke="#5d6f87"/><path d="M2 10h11v6H2z" fill="#e4ebf3"/><path d="M11 11h3v3h-3z" fill="#1b3"/></svg>打印机: 导出为WPS PDF</div>
    <div class="sizes"><svg width="20" height="18"><path d="M1 2h12l5 5v9H1z" fill="#fff" stroke="#5f6f86"/><path d="M7 2v14M13 7v9M1 7h12M1 12h17" stroke="#7d8ca3"/></svg><span>纸张大小: A4</span><span>项目宽度: 184.6毫米</span><span>项目高度: 284.3毫米</span></div>
    <button class="zoom"><svg width="18" height="18" viewBox="0 0 40 40"><use href="#lens"/><path d="M17 10v14M10 17h14" stroke="#4d6f96" stroke-width="4"/></svg>60.2%<i class="chev"></i></button>
  </footer>
</div>
</div>
<div class="behind"><i class="b1"></i><i class="b2"></i><i class="b3"></i><i class="b4"></i><i class="b5"></i></div>

<div class="callout c1"></div>
<div class="callout c2"></div>
<div class="callout c3"></div>
<span class="num n1">1</span>
<span class="num n2">2</span>
<span class="num n3">3</span>
<div class="watermark">CSDN @小理想！</div>
</div>
</body>
</html>
```
FILE: styles.css
```css
* { box-sizing: border-box; }
body { margin: 0; font-family: "Noto Sans", "Noto Sans CJK SC", sans-serif; font-size: 15px; color: #111; }
button { margin: 0; padding: 0; border: 0; background: none; font: inherit; color: inherit; }
h1, h2 { margin: 0; font-size: 15px; font-weight: 400; }
i { font-style: normal; }
svg { display: block; flex: none; overflow: visible; }
.defs { position: absolute; }

.screen { position: relative; display: flex; min-height: 100vh; overflow: hidden; background: #cde8ea; }
.desktop { flex: 1; min-width: 0; padding-bottom: 10px; display: flex; }
.window { flex: 1; min-width: 0; display: flex; flex-direction: column; background: #cfdced; border-bottom: 1px solid #93a3b4; }

.titlebar { height: 29px; display: flex; align-items: center; background: #f3f3f3; padding: 0 4px 0 2px; color: #888; }
.titlebar h1 { flex: 1; margin-left: 6px; font-family: "Noto Sans CJK SC", sans-serif; line-height: 24px; }
.titlebar button { width: 58px; height: 29px; display: flex; align-items: center; justify-content: center; }

.menu { height: 36px; display: flex; align-items: center; gap: 22px; padding: 0 0 4px 14px; }

.bars { display: flex; gap: 5px; height: 50px; margin: 0 0 1px 4px; }
.bar { display: flex; align-items: center; border-radius: 4px; background: linear-gradient(#ecf3fc, #dbe7f4); border-bottom: 2px solid #a5b9d4; overflow: hidden; }
.grip { width: 3px; height: 36px; margin: 0 2px 0 4px; background: repeating-linear-gradient(#9fb2cc 0 3px, transparent 3px 5px); }
.tool { width: 47px; height: 47px; flex: none; display: flex; align-items: center; justify-content: center; border: 1px solid transparent; border-radius: 2px; }
.tool > svg { width: 40px; height: 40px; }
.tool.on { background: linear-gradient(#ffeb9d, #ffd86b 45%, #fff08f); border: 2px solid #cf9a45; }
.sep { width: 9px; height: 38px; background: linear-gradient(90deg, transparent 4px, #9db2cd 4px 5px, #fff 5px 6px, transparent 6px); }
.drop { width: 14px; height: 47px; position: relative; }
.drop::after, .chev::after { content: ""; display: block; margin: auto; width: 0; border: 4px solid transparent; border-top: 4px solid #000; border-bottom: 0; }
.more { width: 14px; height: 50px; margin-left: 3px; display: flex; align-items: flex-end; background: linear-gradient(#d6e2f1, #8fa6c6); }
.digits { font: 14px "Noto Sans", sans-serif; }
.ab { font: 17px "Noto Sans", sans-serif; }
.tiny { font: bold 9px "Noto Sans", sans-serif; fill: #fff; }

.glyph { font: 32px/36px "Liberation Serif", serif; }
.glyph.big { font-size: 40px; font-weight: 700; }
.glyph sub, .glyph sup { font-size: 22px; line-height: 24px; color: #24709f; }
.glyph sub { align-self: flex-end; }
.glyph sup { align-self: flex-start; }
.color { flex-direction: column; font: bold 33px/30px "Liberation Serif", serif; color: #3b7f9d; }
.swatch { width: 40px; height: 7px; margin-top: 3px; background: #000; }
.invert { width: 40px; height: 40px; background: #000; color: #fff; font: bold 33px/40px "Liberation Serif", serif; text-align: center; }

.combo { height: 27px; display: flex; background: #fff; padding: 1px; }
.combo select { flex: 1; min-width: 0; appearance: none; border: 0; padding: 0 0 0 3px; background: none; font: inherit; color: #111; }
.combo .chev { width: 15px; display: flex; align-items: center; background: #dfe9f6; }
.font { width: 211px; }
.size { width: 74px; }
.weight { width: 72px; }
.line { width: 47px; }
.line select { background: linear-gradient(#000, #000) center / 20px 2px no-repeat; }
.chev::after { border-width: 6px 5px 0; }

.work { flex: 1; display: flex; min-height: 0; }
.panel { width: 314px; flex: none; display: flex; flex-direction: column; margin-top: 1px; background: #fff; }
.panel-head { height: 27px; display: flex; align-items: center; gap: 10px; padding: 0 6px 0 5px; background: #bdcad9; border-top: 1px solid #9c9c9c; border-right: 2px solid #9fa9b5; }
.panel-head h2 { flex: 1; }
.tree { flex: 1; }
.node { height: 27px; display: flex; align-items: center; }
.root { padding-left: 3px; gap: 5px; }
.root span { background: #f0f0f0; padding: 0 2px; line-height: 26px; }
.child { padding-left: 9px; gap: 6px; }
.panel-tabs { height: 27px; display: flex; align-items: flex-start; background: #f0f0f0; border-top: 1px solid #9c9c9c; color: #777; padding-left: 10px; }
.panel-tabs button { height: 23px; display: flex; align-items: center; gap: 4px; padding-right: 6px; }
.panel-tabs button + button { border-left: 1px solid #aaa; padding-left: 6px; }
.panel-tabs .active { height: 24px; margin-top: -1px; background: #fff; color: #111; border: 1px solid #9c9c9c; border-top: 0; border-radius: 0 0 4px 4px; }

.document { flex: 1; min-width: 0; margin-left: 4px; border-left: 2px solid #8b8b8b; border-right: 2px solid #f4f4f4; display: flex; flex-direction: column; box-shadow: -4px 0 #efefef; }
.doc-tabs { height: 29px; display: flex; align-items: flex-end; padding: 0 0 1px 4px; border-bottom: 2px solid #8b8b8b; }
.doc-tab { height: 24px; display: flex; align-items: center; gap: 9px; padding: 0 6px; background: linear-gradient(#fff0c4, #ffd977); border-right: 2px solid #333; font-weight: 700; }
.editor { flex: 1; display: grid; grid-template-columns: 22px 1fr 22px; grid-template-rows: 23px 1fr 21px; background: #f0f0f0; }
.corner, .ruler-v { background: linear-gradient(90deg, #edf3fc, #d8e4f2); }
.ruler-h { grid-column: 2 / 4; position: relative; background: linear-gradient(#f0f5fd, #dbe6f3); border-bottom: 1px solid #000; overflow: hidden; font: 13px/15px "Liberation Mono", monospace; }
.ruler-h .marks { position: absolute; inset: 4px 0 0; display: flex; }
.ruler-h span { width: 57px; flex: none; text-align: right; padding-right: 2px; }
.ruler-h span:first-child { width: 33px; }
.ruler-h .unit { font: 15px/15px "Noto Sans CJK SC", sans-serif; width: 49px; }
.ruler-v { grid-row: 2 / 4; position: relative; border-right: 1px solid #000; overflow: hidden; font: 13px/14px "Liberation Mono", monospace; }
.ruler-v > svg { position: absolute; }
.ruler-v .marks { display: flex; flex-direction: column; padding-left: 4px; height: 0; }
.ruler-v span { height: 57px; flex: none; writing-mode: vertical-rl; transform: rotate(180deg); text-align: right; padding-bottom: 4px; width: 14px; }
.ruler-v span:first-child { height: 18px; }
.canvas { padding: 18px 0 17px; background: linear-gradient(#c8daf1, #84a1c0); }
.page { width: 526px; height: 809px; margin: 0 auto; border-radius: 9px; background: #fff; box-shadow: 0 0 8px 8px rgba(70, 88, 112, .45); }
.scroll-v { display: flex; justify-content: center; padding: 143px 0 142px; }
.scroll-v i { width: 3px; background: #858585; border-radius: 2px; }
.scroll-h { grid-column: 2 / 4; display: flex; align-items: center; gap: 7px; padding: 0 28px 0 6px; }
.scroll-h i { flex: 1; height: 6px; background: #858585; border-radius: 3px; }
.sheets { height: 29px; display: flex; padding: 0 0 0 11px; border-bottom: 1px solid #f4f4f4; }
.sheet { position: relative; height: 22px; display: flex; align-items: center; justify-content: center; line-height: 20px; padding-bottom: 1px; }
.sheet .edge { position: absolute; left: 0; top: 0; height: 23px; overflow: visible; }
.sheet span, .sheet .pic { position: relative; }
.sheet.active { z-index: 1; }
.w70 { width: 65px; }
.w35 { width: 34px; }
.w58 { width: 58px; }

.dock { width: 51px; flex: none; margin: 5px 0 0 1px; display: flex; flex-direction: column; align-items: center; align-self: flex-start; background: linear-gradient(90deg, #edf4fd, #d8e4f1); border-right: 2px solid #9fb4d0; border-radius: 4px; }
.dock .grip { width: 38px; height: 3px; margin: 3px 0; background: repeating-linear-gradient(90deg, #9fb2cc 0 3px, transparent 3px 5px); }
.rule { width: 38px; height: 1px; margin: 6px 0 4px; background: #9fb8d6; }
.framed { width: 40px; height: 35px; margin: 6px 0; border: 1px solid #b8b8b8; border-radius: 4px; background: #ebebeb; }
.turn { flex-direction: column; font: 15px/15px "DejaVu Sans", sans-serif; color: #888; }
.turn > svg { width: 28px; height: 17px; }
.turn > .wide { width: 38px; }
.flip { transform: scaleX(-1); }
.dock-more { width: 51px; height: 14px; padding: 0 6px; display: flex; align-items: center; justify-content: flex-end; background: linear-gradient(90deg, #d6e2f1, #93a9c7); }

.status { height: 27px; display: flex; align-items: center; background: linear-gradient(#dae6f3, #b4c6dc); }
.status > div, .zoom { height: 24px; display: flex; align-items: center; }
.printer { width: 327px; padding-left: 5px; gap: 6px; }
.sizes { flex: 1; border-left: 1px solid #9fb0c6; padding-left: 5px; gap: 10px; }
.sizes svg { margin-right: -4px; }
.zoom { width: 130px; border-left: 1px solid #9fb0c6; padding-left: 8px; gap: 8px; }
.zoom .chev { margin-left: 4px; }

.behind { width: 10px; display: flex; flex-direction: column; background: #f7f7f8; }
.b1 { height: 50px; background: #000; }
.b2 { height: 34px; background: #c4c4c4; }
.b3 { flex: 1; border-left: 3px solid #eee; border-bottom: 1px solid #aaa; }
.b4 { height: 48px; background: #d6eee3; }
.b5 { height: 20px; background: #000; }

/* review marks laid over the window */
.callout { position: absolute; border: 4px solid #ff1f10; border-radius: 3px; pointer-events: none; }
.c1 { left: 405px; top: 43px; width: 1323px; height: 135px; }
.c2 { left: 310px; top: 197px; width: 1553px; height: 875px; }
.c3 { left: 297px; top: 1074px; width: 271px; height: 48px; }
.num { position: absolute; color: #ff1f10; font-size: 27px; line-height: 30px; }
.n1 { left: 544px; top: 118px; }
.n2 { left: 650px; top: 433px; }
.n3 { left: 524px; top: 1087px; }
.watermark { position: absolute; right: 0; bottom: 12px; font: 300 36px/44px Roboto, "Noto Sans CJK SC", sans-serif; white-space: nowrap; color: rgba(240, 244, 248, .8); text-shadow: 1px 2px 2px rgba(90, 100, 115, .8); }
```
